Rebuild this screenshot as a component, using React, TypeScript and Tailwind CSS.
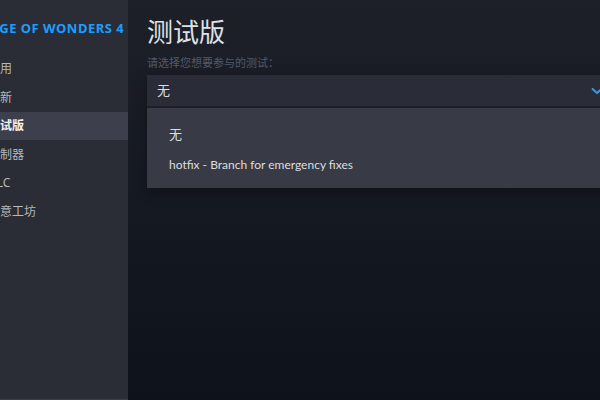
import React from "react";

const items = ["通用", "更新", "测试版", "控制器", "DLC", "创意工坊"];

export default function App() {
  return (
    <div
      className="w-[600px] h-[400px] flex overflow-hidden bg-[#0f131b]"
      style={{ fontFamily: '"Noto Sans", "Noto Sans CJK SC", sans-serif' }}
    >
      <div className="w-[128px] h-full shrink-0 overflow-hidden bg-[#2a2c36] border-b border-[#3a3d48]">
        <div className="h-[54.7px] pt-[19px]">
          <div className="ml-[-10px] whitespace-nowrap text-[13px] leading-[18px] font-bold text-[#1a9fff] tracking-[0.5px]">
            AGE OF WONDERS 4
          </div>
        </div>
        {items.map((it) => {
          const sel = it === "测试版";
          return (
            <div
              key={it}
              className={
                sel
                  ? "h-[28.6px] flex items-center bg-[#3d404c]"
                  : "h-[28.6px] flex items-center"
              }
            >
              <span
                className={
                  sel
                    ? "ml-[-12px] whitespace-nowrap text-[12px] font-bold text-[#f0f2f4]"
                    : "ml-[-12px] whitespace-nowrap text-[12px] text-[#b5b8bd]"
                }
              >
                {it}
              </span>
            </div>
          );
        })}
      </div>
      <div className="flex-1 h-full overflow-hidden bg-linear-to-b from-[#1d2029] via-[#151922] to-[#0e131b] pl-[19px] pt-[16px]">
        <div className="text-[26px] leading-[32px] text-[#dfe2e5] whitespace-nowrap">测试版</div>
        <div className="mt-[8px] text-[11px] leading-[14px] text-[#535a66] whitespace-nowrap">
          请选择您想要参与的测试：
        </div>
        <div className="mt-[5px] w-[470px] shadow-[0_4px_12px_rgba(0,0,0,0.35)]">
          <div className="h-[33px] bg-[#2a2d38] flex items-center justify-between pl-[10px] pr-[14px] border-b-2 border-[#1c1f27]">
            <span className="text-[13px] text-[#dcdedf]">无</span>
            <svg width="12" height="8" viewBox="0 0 12 8" fill="none">
              <path d="M1 1.5 L6 6 L11 1.5" stroke="#3d9be9" strokeWidth="2" />
            </svg>
          </div>
          <div className="h-[80px] bg-[#383b46] pl-[22px] pt-[12px]">
            <div className="h-[30px] flex items-center text-[13px] text-[#dcdedf]">无</div>
            <div
              className="h-[30px] flex items-center text-[12px] text-[#dcdedf] whitespace-nowrap"
              style={{ fontFamily: 'Lato, "Noto Sans", sans-serif' }}
            >
              hotfix - Branch for emergency fixes
            </div>
          </div>
        </div>
      </div>
    </div>
  );
}
